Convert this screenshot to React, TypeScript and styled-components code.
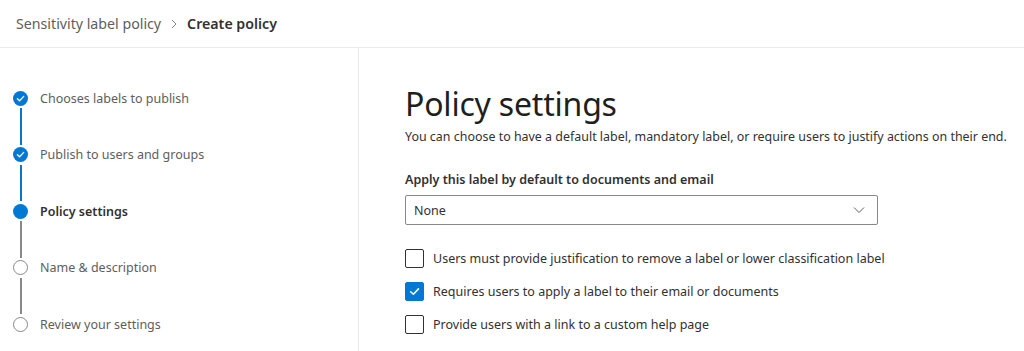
import React from 'react';
import styled, {createGlobalStyle} from 'styled-components';

const GlobalStyle = createGlobalStyle`
  html, body {
    margin: 0;
    padding: 0;
    background: #ffffff;
  }
  body {
    font-family: 'Segoe UI', 'Noto Sans', 'Open Sans', sans-serif;
    color: #323130;
    -webkit-font-smoothing: antialiased;
  }
`;

const Page = styled.div`
  width: 1024px;
  height: 351px;
  display: flex;
  flex-direction: column;
  overflow: hidden;
`;

const Header = styled.div`
  height: 47px;
  flex: none;
  display: flex;
  align-items: center;
  padding-left: 16px;
  border-bottom: 1px solid #edebe9;
  font-size: 14.2px;
  gap: 9px;
`;

const Crumb = styled.span<{current?: boolean}>`
  color: ${p => (p.current ? '#323130' : '#605e5c')};
  font-weight: ${p => (p.current ? 600 : 400)};
`;

const Body = styled.div`
  flex: 1;
  display: flex;
`;

const Nav = styled.div`
  width: 359px;
  flex: none;
  border-right: 1px solid #edebe9;
  padding: 40px 0 0 13px;
  box-sizing: border-box;
`;

const Step = styled.div`
  display: flex;
  flex-direction: column;
`;

const StepRow = styled.div`
  display: flex;
  align-items: center;
  height: 20px;
  gap: 12px;
`;

const Dot = styled.div<{state: 'done' | 'current' | 'todo'}>`
  width: 15px;
  height: 15px;
  border-radius: 50%;
  box-sizing: border-box;
  flex: none;
  display: flex;
  align-items: center;
  justify-content: center;
  background: ${p => (p.state === 'todo' ? '#ffffff' : '#0078d4')};
  border: ${p => (p.state === 'todo' ? '1.5px solid #8a8886' : 'none')};
`;

const StepLabel = styled.span<{current?: boolean}>`
  font-size: 12.5px;
  color: ${p => (p.current ? '#323130' : '#605e5c')};
  font-weight: ${p => (p.current ? 600 : 400)};
`;

const Connector = styled.div<{done?: boolean}>`
  width: 2px;
  height: 36.6px;
  margin-left: 6.5px;
  background: ${p => (p.done ? '#0078d4' : '#8a8886')};
`;

const Main = styled.div`
  flex: 1;
  padding: 34px 0 0 46px;
`;

const Title = styled.h1`
  margin: 0;
  font-size: 32px;
  font-weight: 400;
  line-height: 44px;
  color: #201f1e;
  letter-spacing: -0.2px;
`;

const Description = styled.p`
  margin: 2px 0 0;
  font-size: 12.45px;
  line-height: 18px;
  color: #323130;
  white-space: nowrap;
`;

const FieldLabel = styled.div`
  margin-top: 25px;
  font-size: 12.5px;
  font-weight: 600;
  line-height: 18px;
  color: #323130;
`;

const Select = styled.div`
  margin-top: 6px;
  width: 473px;
  height: 30px;
  box-sizing: border-box;
  border: 1px solid #8a8886;
  border-radius: 2px;
  display: flex;
  align-items: center;
  justify-content: space-between;
  padding: 0 12px 0 8px;
  font-size: 12.5px;
  color: #323130;
`;

const Options = styled.div`
  margin-top: 24px;
  display: flex;
  flex-direction: column;
  gap: 14px;
`;

const OptionRow = styled.label`
  display: flex;
  align-items: center;
  gap: 9px;
  font-size: 12.5px;
  color: #323130;
  height: 19px;
`;

const Box = styled.span<{checked?: boolean}>`
  width: 19px;
  height: 19px;
  box-sizing: border-box;
  border-radius: 2px;
  flex: none;
  display: flex;
  align-items: center;
  justify-content: center;
  background: ${p => (p.checked ? '#0078d4' : '#ffffff')};
  border: 1px solid ${p => (p.checked ? '#0078d4' : '#323130')};
`;

const Check = ({size = 9}: {size?: number}) => (
  <svg width={size} height={size} viewBox="0 0 10 10" fill="none">
    <path d="M1.5 5.2 L4 7.5 L8.6 2.6" stroke="#ffffff" strokeWidth="1.4" strokeLinecap="round" strokeLinejoin="round" />
  </svg>
);

const steps: {label: string; state: 'done' | 'current' | 'todo'}[] = [
  {label: 'Chooses labels to publish', state: 'done'},
  {label: 'Publish to users and groups', state: 'done'},
  {label: 'Policy settings', state: 'current'},
  {label: 'Name & description', state: 'todo'},
  {label: 'Review your settings', state: 'todo'},
];

const options = [
  {label: 'Users must provide justification to remove a label or lower classification label', checked: false},
  {label: 'Requires users to apply a label to their email or documents', checked: true},
  {label: 'Provide users with a link to a custom help page', checked: false},
];

export default function App() {
  return (
    <Page>
      <GlobalStyle />
      <Header>
        <Crumb>Sensitivity label policy</Crumb>
        <svg width="8" height="10" viewBox="0 0 8 10" fill="none">
          <path d="M2 1 L6 5 L2 9" stroke="#8a8886" strokeWidth="1" />
        </svg>
        <Crumb current>Create policy</Crumb>
      </Header>
      <Body>
        <Nav>
          {steps.map((s, i) => (
            <Step key={s.label}>
              <StepRow>
                <Dot state={s.state}>{s.state === 'done' && <Check size={9} />}</Dot>
                <StepLabel current={s.state === 'current'}>{s.label}</StepLabel>
              </StepRow>
              {i < steps.length - 1 && <Connector done={s.state === 'done'} />}
            </Step>
          ))}
        </Nav>
        <Main>
          <Title>Policy settings</Title>
          <Description>
            You can choose to have a default label, mandatory label, or require users to justify actions on their end.
          </Description>
          <FieldLabel>Apply this label by default to documents and email</FieldLabel>
          <Select>
            <span>None</span>
            <svg width="12" height="8" viewBox="0 0 12 8" fill="none">
              <path d="M1 1.5 L6 6.5 L11 1.5" stroke="#605e5c" strokeWidth="1" />
            </svg>
          </Select>
          <Options>
            {options.map(o => (
              <OptionRow key={o.label}>
                <Box checked={o.checked}>{o.checked && <Check size={11} />}</Box>
                <span>{o.label}</span>
              </OptionRow>
            ))}
          </Options>
        </Main>
      </Body>
    </Page>
  );
}
